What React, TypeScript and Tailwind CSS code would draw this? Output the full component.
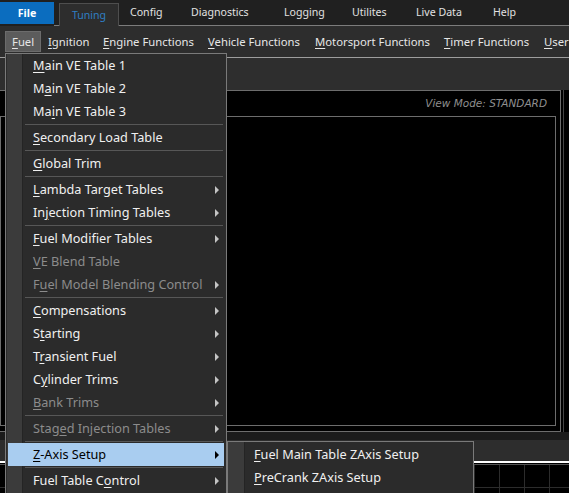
type Item =
  | { sep: true }
  | { label: string; key: number; sub?: boolean; disabled?: boolean; active?: boolean };

const fuelItems: Item[] = [
  { label: "Main VE Table 1", key: 0 },
  { label: "Main VE Table 2", key: 1 },
  { label: "Main VE Table 3", key: 2 },
  { sep: true },
  { label: "Secondary Load Table", key: 0 },
  { sep: true },
  { label: "Global Trim", key: 0 },
  { sep: true },
  { label: "Lambda Target Tables", key: 0, sub: true },
  { label: "Injection Timing Tables", key: 2, sub: true },
  { sep: true },
  { label: "Fuel Modifier Tables", key: 0, sub: true },
  { label: "VE Blend Table", key: 0, disabled: true },
  { label: "Fuel Model Blending Control", key: 1, sub: true, disabled: true },
  { sep: true },
  { label: "Compensations", key: 0, sub: true },
  { label: "Starting", key: 1, sub: true },
  { label: "Transient Fuel", key: 1, sub: true },
  { label: "Cylinder Trims", key: 1, sub: true },
  { label: "Bank Trims", key: 0, sub: true, disabled: true },
  { sep: true },
  { label: "Staged Injection Tables", key: 4, sub: true, disabled: true },
  { sep: true },
  { label: "Z-Axis Setup", key: 0, sub: true, active: true },
  { sep: true },
  { label: "Fuel Table Control", key: 12, sub: true },
];

const tabs = [
  { label: "Config", w: "w-[61px]" },
  { label: "Diagnostics", w: "w-[93px]" },
  { label: "Logging", w: "w-[68px]" },
  { label: "Utilites", w: "w-[64px]" },
  { label: "Live Data", w: "w-[77px]" },
  { label: "Help", w: "w-[60px]" },
];

const menuBar = [
  { label: "Ignition", w: "w-[55px]" },
  { label: "Engine Functions", w: "w-[105px]" },
  { label: "Vehicle Functions", w: "w-[107px]" },
  { label: "Motorsport Functions", w: "w-[129px]" },
  { label: "Timer Functions", w: "w-[100px]" },
  { label: "User", w: "w-[60px]" },
];

function Keyed({ text, k }: { text: string; k: number }) {
  return (
    <span className="whitespace-nowrap">
      {text.slice(0, k)}
      <span className="underline underline-offset-[2px]">{text[k]}</span>
      {text.slice(k + 1)}
    </span>
  );
}

function Arrow({ dark }: { dark?: boolean }) {
  return (
    <span
      className={`ml-auto h-0 w-0 border-y-[4px] border-l-[4px] border-y-transparent ${
        dark ? "border-l-black" : "border-l-[#c4c4c4]"
      }`}
    />
  );
}

function MenuRow({ item }: { item: Item }) {
  if ("sep" in item) {
    return (
      <div className="flex h-[3px] items-center pl-[19px] pr-[3px]">
        <div className="h-px w-full bg-[#575757]" />
      </div>
    );
  }
  const color = item.active
    ? "bg-[#a9cdf0] text-black"
    : item.disabled
      ? "text-[#8c8c8c]"
      : "text-[#f0f0f0]";
  return (
    <div className={`mx-[2px] flex h-[23px] items-center pl-[25px] pr-[5px] ${color}`}>
      <Keyed text={item.label} k={item.key} />
      {item.sub && <Arrow dark={item.active} />}
    </div>
  );
}

export default function App() {
  return (
    <div className="relative flex h-[493px] w-[569px] flex-col overflow-hidden bg-[#2d2d2d] font-['Noto_Sans',sans-serif] text-[12.7px] leading-none">
      {/* ribbon tabs */}
      <div className="flex h-[26px] shrink-0 bg-[#202020] text-[10.6px]">
        <div className="mt-[2px] flex h-[22px] w-[54px] shrink-0 items-center justify-center bg-[#0b6dbf] font-bold text-white">
          File
        </div>
        <div className="w-[5px] shrink-0 border-b border-[#7c7c7c]" />
        <div className="mt-[3px] flex h-[23px] w-[60px] shrink-0 items-center justify-center border-x border-t border-[#4e4e4e] bg-[#2d2d2d] text-[#2f7fc4]">
          Tuning
        </div>
        <div className="flex flex-1 items-center overflow-hidden border-b border-[#7c7c7c] pl-[11px] text-[#e2e2e2]">
          {tabs.map((t) => (
            <span key={t.label} className={`${t.w} shrink-0 whitespace-nowrap`}>
              {t.label}
            </span>
          ))}
        </div>
      </div>

      {/* menu bar */}
      <div className="flex h-[32px] shrink-0 items-center overflow-hidden border-b border-[#9d9d9d] text-[11.3px] text-[#e6e6e6]">
        <div className="ml-[5px] flex h-[21px] w-[36px] shrink-0 items-center border border-[#6c6c6c] bg-[#5c5c5c] pl-[6px]">
          <Keyed text="Fuel" k={0} />
        </div>
        {menuBar.map((m) => (
          <div key={m.label} className={`${m.w} shrink-0 pl-[7px]`}>
            <Keyed text={m.label} k={0} />
          </div>
        ))}
      </div>

      {/* toolbar strip */}
      <div className="h-[32px] shrink-0 bg-[#2e2e2e]" />

      {/* table panel */}
      <div className="flex h-[342px] shrink-0">
        <div className="flex flex-1 flex-col border-y border-r border-[#6d6d6d] bg-black">
          <div className="flex h-[25px] shrink-0 items-center justify-end pr-[13px] font-['DejaVu_Sans',sans-serif] text-[10.5px] italic text-[#8e8e8e]">
            View Mode: STANDARD
          </div>
          <div className="mb-[5px] mr-[4px] flex-1 border border-[#6d6d6d]" />
        </div>
        <div className="w-[8px] bg-black pl-[2px]">
          <div className="h-full border-l border-[#444]" />
        </div>
      </div>

      <div className="h-[8px] shrink-0 bg-[#1b1b1b]" />
      <div className="h-[21px] shrink-0 bg-[#2d2d2d]" />
      <div className="h-[2px] shrink-0 bg-white" />
      <div className="h-[2px] shrink-0 border-b border-[#555] bg-black" />
      <div className="flex-1 bg-black bg-[linear-gradient(to_right,#2c2c2c_1px,transparent_1px),linear-gradient(to_bottom,#2c2c2c_1px,transparent_1px)] bg-[size:25px_25px] bg-[position:24px_22px]" />

      {/* Fuel dropdown */}
      <div className="absolute left-[5px] top-[53px] h-[448px] w-[222px] border border-[#7a7a7a] bg-[#2b2b2b] bg-[linear-gradient(to_right,#2b2b2b_0_1px,#3b3b3b_1px_16px,#242424_16px_17px,#2b2b2b_17px)]">
        {fuelItems.map((it, i) => (
          <MenuRow key={i} item={it} />
        ))}
      </div>

      {/* Z-Axis submenu */}
      <div className="absolute left-[227px] top-[441px] h-[60px] w-[247px] border border-[#7a7a7a] bg-[#2b2b2b] bg-[linear-gradient(to_right,#3b3b3b_0_16px,#242424_16px_17px,#2b2b2b_17px)] pt-px text-[#f0f0f0]">
        <div className="flex h-[23px] items-center pl-[26px]">
          <Keyed text="Fuel Main Table ZAxis Setup" k={0} />
        </div>
        <div className="flex h-[23px] items-center pl-[26px]">
          <Keyed text="PreCrank ZAxis Setup" k={0} />
        </div>
      </div>
    </div>
  );
}
